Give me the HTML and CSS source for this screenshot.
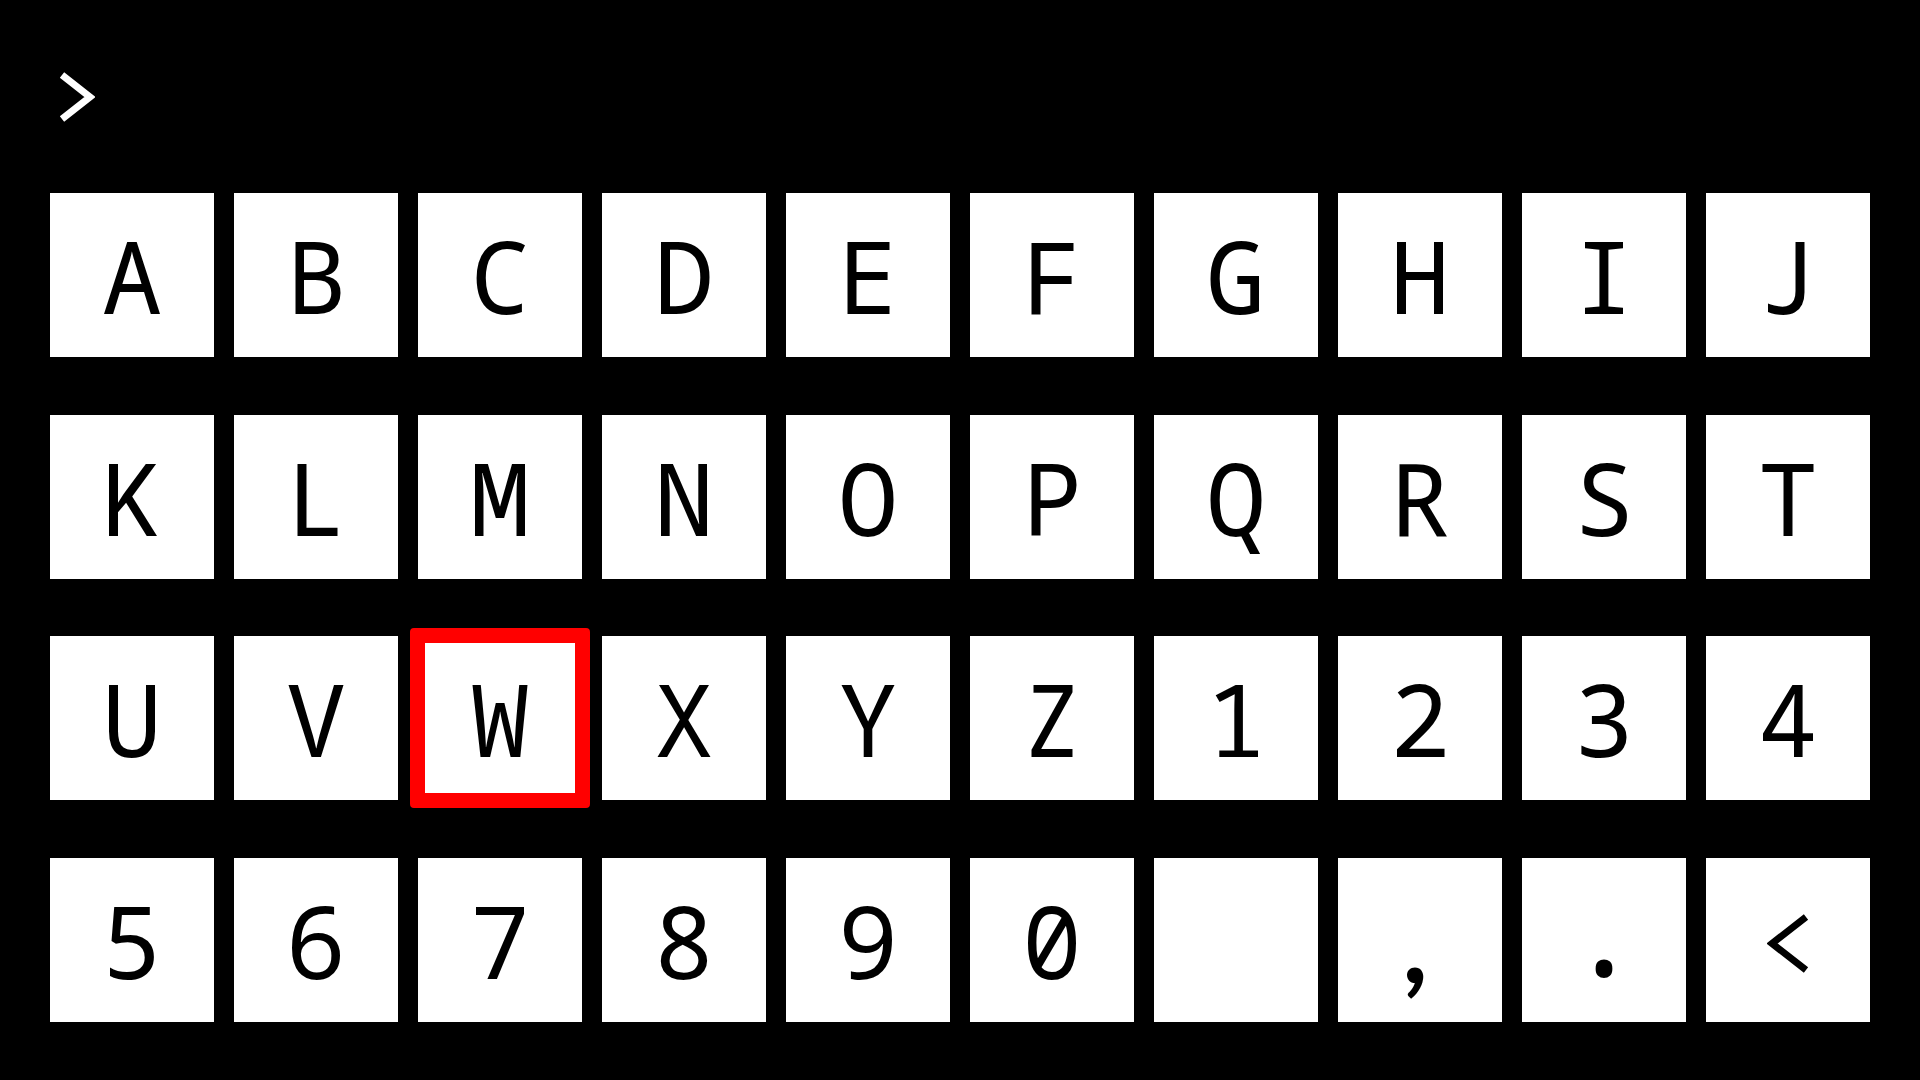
FILE: index.html
```html
<!DOCTYPE html>
<html lang="en">
<head>
<meta charset="utf-8">
<title>Keyboard</title>
<link rel="stylesheet" href="styles.css">
</head>
<body>
<div class="screen">
  <div class="prompt">
    <svg class="prompt-icon" width="36" height="50" viewBox="0 0 36 50" role="img" aria-label="&gt;">
      <polyline points="3,3 31,25 3,47" fill="none" stroke="#fff" stroke-width="7" stroke-linejoin="miter" stroke-linecap="butt"/>
    </svg>
  </div>
  <div class="keyboard">
    <div class="key">A</div><div class="key">B</div><div class="key">C</div><div class="key">D</div><div class="key">E</div>
    <div class="key">F</div><div class="key">G</div><div class="key">H</div><div class="key">I</div><div class="key">J</div>
    <div class="key">K</div><div class="key">L</div><div class="key">M</div><div class="key">N</div><div class="key">O</div>
    <div class="key">P</div><div class="key">Q</div><div class="key">R</div><div class="key">S</div><div class="key">T</div>
    <div class="key">U</div><div class="key">V</div><div class="key selected">W</div><div class="key">X</div><div class="key">Y</div>
    <div class="key">Z</div><div class="key">1</div><div class="key">2</div><div class="key">3</div><div class="key">4</div>
    <div class="key">5</div><div class="key">6</div><div class="key">7</div><div class="key">8</div><div class="key">9</div>
    <div class="key">0</div><div class="key"> </div><div class="key comma">,</div><div class="key period">.</div>
    <div class="key back">
      <svg width="42" height="60" viewBox="0 0 42 60" role="img" aria-label="&lt;">
        <polyline points="39,3 5,29.5 39,56" fill="none" stroke="#000" stroke-width="7" stroke-linejoin="miter" stroke-linecap="butt"/>
      </svg>
    </div>
  </div>
</div>
</body>
</html>
```
FILE: styles.css
```css
html, body {
  margin: 0;
  padding: 0;
  background: #000;
}
.screen {
  width: 1920px;
  height: 1080px;
  box-sizing: border-box;
  padding: 0 50px;
  display: flex;
  flex-direction: column;
  font-family: "Noto Sans Mono", "DejaVu Sans Mono", monospace;
}
.prompt {
  height: 193px;
  box-sizing: border-box;
  padding: 72px 0 0 9px;
}
.prompt-icon {
  display: block;
}
.keyboard {
  display: grid;
  grid-template-columns: repeat(10, 164px);
  grid-auto-rows: 164px;
  column-gap: 20px;
  row-gap: 57.7px;
}
.key {
  background: #fff;
  color: #000;
  display: flex;
  align-items: center;
  justify-content: center;
  font-size: 100px;
  line-height: 1;
  white-space: pre;
}
.key.comma {
  font-family: Lato, "Noto Sans Mono", sans-serif;
  font-weight: 700;
  font-size: 110px;
  padding-right: 10px;
}
.key.period {
  font-size: 135px;
  padding-bottom: 30px;
}
.key.back svg {
  display: block;
  margin: 8px 0 0 0;
}
.key.selected {
  margin: -8px;
  border: 15px solid #ff0000;
  border-radius: 4px;
}
```
